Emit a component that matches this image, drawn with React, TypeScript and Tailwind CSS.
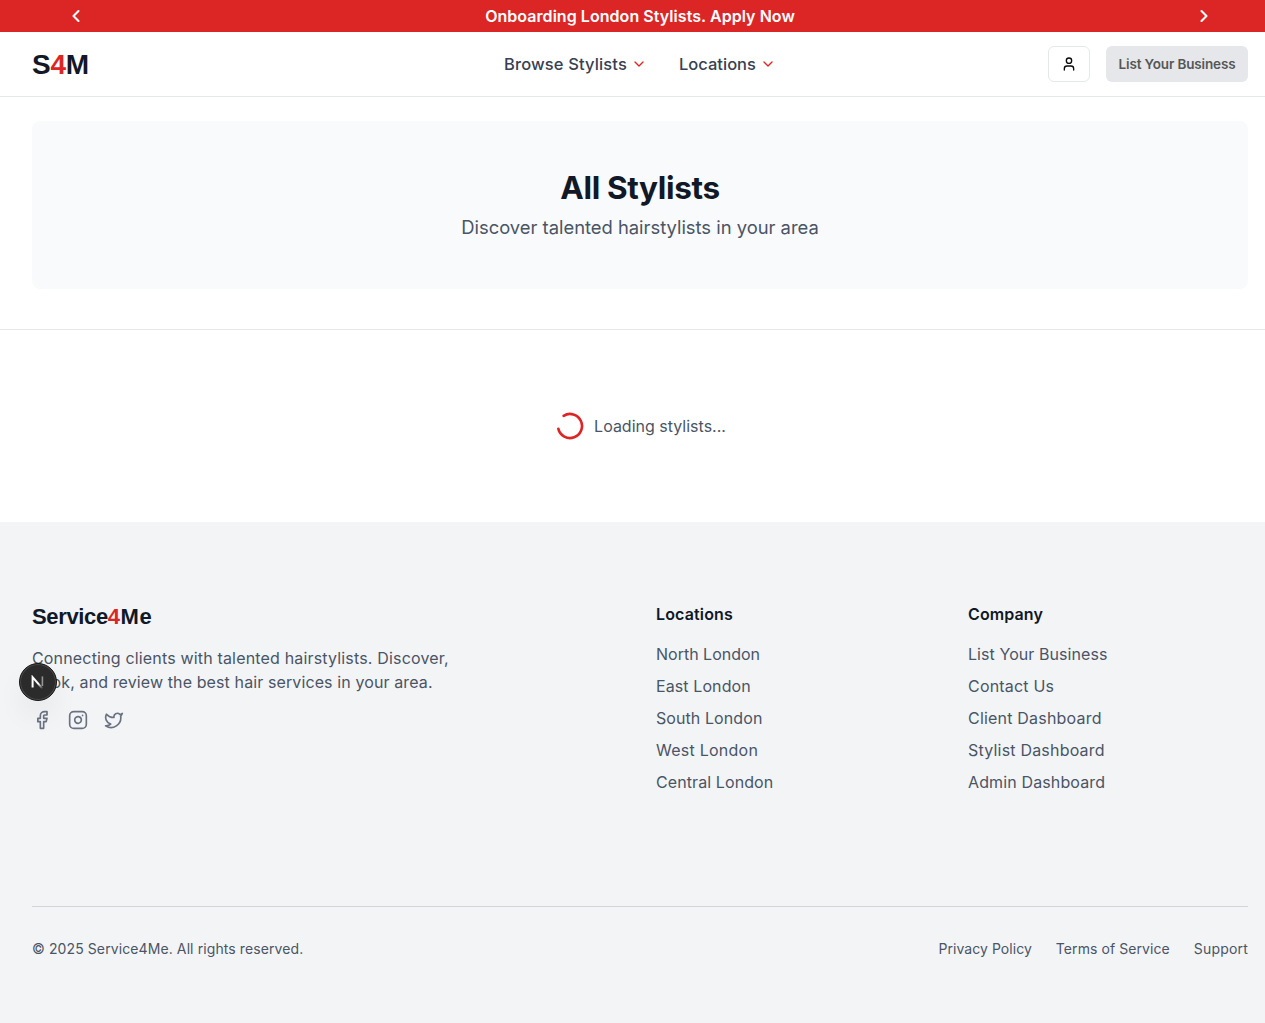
import {
  ChevronDown,
  ChevronLeft,
  ChevronRight,
  Facebook,
  Instagram,
  LoaderCircle,
  Twitter,
  User,
} from "lucide-react";

const locations: [string, string][] = [
  ["North London", "tracking-normal"],
  ["East London", "tracking-[0.1px]"],
  ["South London", "tracking-[0.08px]"],
  ["West London", "tracking-[0.25px]"],
  ["Central London", "tracking-[0.09px]"],
];

const company: [string, string][] = [
  ["List Your Business", "tracking-[0.07px]"],
  ["Contact Us", "tracking-[0.2px]"],
  ["Client Dashboard", "tracking-[0.2px]"],
  ["Stylist Dashboard", "tracking-[0.2px]"],
  ["Admin Dashboard", "tracking-[0.13px]"],
];

function LinkColumn({ title, titleClass, links }: { title: string; titleClass: string; links: [string, string][] }) {
  return (
    <div className="flex flex-col">
      <h3 className={`font-semibold leading-6 text-gray-900 ${titleClass}`}>{title}</h3>
      <ul className="mt-4 flex flex-col gap-2">
        {links.map(([label, tracking]) => (
          <li key={label} className={`leading-6 whitespace-nowrap ${tracking}`}>
            <a href="#">{label}</a>
          </li>
        ))}
      </ul>
    </div>
  );
}

export default function App() {
  return (
    <div className="h-[1023px] w-full overflow-hidden bg-white font-['Inter',sans-serif] text-base text-[#4a5565]">
      <div className="flex w-[1280px] flex-col">
        <div className="flex h-8 items-center justify-between bg-[#dc2626] px-[66px] text-white">
          <ChevronLeft size={20} strokeWidth={2.5} />
          <p className="font-semibold leading-6 tracking-[0.05px]">Onboarding London Stylists. Apply Now</p>
          <ChevronRight size={20} strokeWidth={2.5} />
        </div>

        <header className="grid h-[65px] grid-cols-3 items-center border-b border-gray-200 px-8">
          <div className="pt-0.5 font-['Liberation_Sans',sans-serif] text-[28px] font-bold leading-8 tracking-[-0.3px] text-[#111827]">
            S<span className="text-[#dc2626]">4</span>M
          </div>
          <nav className="flex justify-center gap-8 text-[16.5px] font-medium text-[#374151]">
            <a href="#" className="flex items-center gap-1 whitespace-nowrap tracking-[0.13px]">
              Browse Stylists <ChevronDown size={16} className="text-[#dc2626]" />
            </a>
            <a href="#" className="flex items-center gap-1 tracking-[0.01px]">
              Locations <ChevronDown size={16} className="text-[#dc2626]" />
            </a>
          </nav>
          <div className="flex justify-end gap-4">
            <button className="flex h-9 w-[42px] items-center justify-center rounded-md border border-gray-200 text-neutral-950">
              <User size={16} />
            </button>
            <button className="h-9 w-[142px] whitespace-nowrap rounded-md bg-[#e5e7eb] text-[13.5px] font-semibold tracking-[-0.14px] text-[#565656]">
              List Your Business
            </button>
          </div>
        </header>

        <section className="border-b border-gray-200 px-8 pt-6 pb-10">
          <div className="flex h-[168px] flex-col items-center rounded-lg bg-[#f9fafb] pt-[49px]">
            <h1 className="text-[31.5px] font-bold leading-9 tracking-[-0.35px] text-[#111827]">All Stylists</h1>
            <p className="mt-[7px] text-[18.4px] leading-7 tracking-[-0.01px]">Discover talented hairstylists in your area</p>
          </div>
        </section>

        <section className="flex h-48 items-center justify-center gap-2">
          <LoaderCircle size={32} className="rotate-[238deg] text-[#dc2626]" />
          <span>Loading stylists...</span>
        </section>

        <footer className="relative h-[501px] bg-[#f3f4f6] px-8 pt-20">
          <div className="grid h-[304px] grid-cols-4 gap-8">
            <div className="col-span-2">
              <div className="pt-px font-['Liberation_Sans',sans-serif] text-[22px] font-bold leading-7 tracking-[-0.35px] text-[#111827]">
                Service<span className="tracking-[0.4px] text-[#dc2626]">4</span>
                <span className="tracking-[0.6px]">Me</span>
              </div>
              <p className="mt-[15px] leading-6 whitespace-nowrap">
                <span className="tracking-[0.17px]">Connecting clients with talented hairstylists. Discover,</span>
                <br />
                <span className="tracking-[0.11px]">book, and review the best hair services in your area.</span>
              </p>
              <div className="mt-4 flex gap-4 text-[#6a7282]">
                <Facebook size={20} />
                <Instagram size={20} />
                <Twitter size={20} />
              </div>
            </div>
            <LinkColumn title="Locations" titleClass="tracking-[0.15px]" links={locations} />
            <LinkColumn title="Company" titleClass="tracking-[0.11px]" links={company} />
          </div>
          <div className="flex justify-between border-t border-[#d1d5dc] pt-8 text-sm leading-5">
            <p className="tracking-[0.1px]">© 2025 Service4Me. All rights reserved.</p>
            <div className="flex gap-6">
              <a href="#" className="tracking-[0.05px]">Privacy Policy</a>
              <a href="#" className="tracking-[0.07px]">Terms of Service</a>
              <a href="#" className="tracking-[0.2px]">Support</a>
            </div>
          </div>

          <div className="absolute top-[141px] left-[19px] flex size-[38px] items-center justify-center rounded-full border border-[#171717] bg-[#2b2b2b] shadow-[inset_0_0_0_1px_#4a4a4a,0_16px_32px_-8px_rgba(0,0,0,0.14)]">
            <svg width="14" height="14" viewBox="0 0 14 14" fill="none">
              <defs>
                <linearGradient id="diagonal" x1="8" y1="8" x2="12" y2="13.5" gradientUnits="userSpaceOnUse">
                  <stop stopColor="#fff" />
                  <stop offset="1" stopColor="#fff" stopOpacity="0" />
                </linearGradient>
              </defs>
              <path d="M1.6 12.4V2.2L11.8 14" stroke="url(#diagonal)" strokeWidth="2" />
              <path d="M11.4 1.4V11" stroke="#fff" strokeOpacity="0.5" strokeWidth="1.6" />
            </svg>
          </div>
        </footer>
      </div>
    </div>
  );
}
